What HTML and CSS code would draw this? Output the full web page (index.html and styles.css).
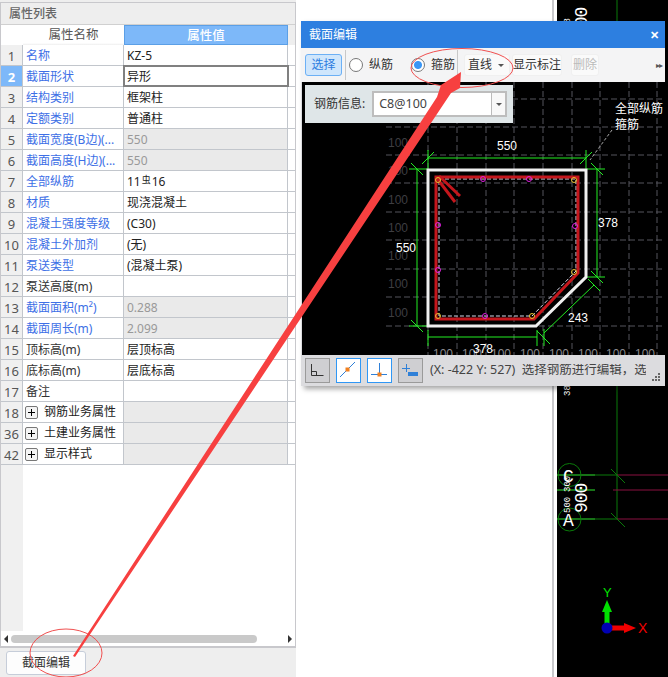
FILE: index.html
```html
<!DOCTYPE html>
<html lang="zh">
<head>
<meta charset="utf-8">
<title>截面编辑</title>
<link rel="stylesheet" href="styles.css">
</head>
<body>
<div class="app">
  <aside class="panel">
    <div class="panel-body">
      <div class="panel-title">属性列表</div>
      <div class="row head"><div></div><div class="h-name">属性名称</div><div class="h-value">属性值</div><div></div></div>
      <div class="row"><div class="idx">1</div><div class="name link">名称</div><div class="val">KZ-5</div><div></div></div>
      <div class="row"><div class="idx sel">2</div><div class="name link">截面形状</div><div class="val current">异形</div><div></div></div>
      <div class="row"><div class="idx">3</div><div class="name link">结构类别</div><div class="val">框架柱</div><div></div></div>
      <div class="row"><div class="idx">4</div><div class="name link">定额类别</div><div class="val">普通柱</div><div></div></div>
      <div class="row"><div class="idx">5</div><div class="name link">截面宽度(B边)(...</div><div class="val off">550</div><div></div></div>
      <div class="row"><div class="idx">6</div><div class="name link">截面高度(H边)(...</div><div class="val off">550</div><div></div></div>
      <div class="row"><div class="idx">7</div><div class="name link">全部纵筋</div><div class="val">11<span class="rebar">虫</span>16</div><div></div></div>
      <div class="row"><div class="idx">8</div><div class="name link">材质</div><div class="val">现浇混凝土</div><div></div></div>
      <div class="row"><div class="idx">9</div><div class="name link">混凝土强度等级</div><div class="val">(C30)</div><div></div></div>
      <div class="row"><div class="idx">10</div><div class="name link">混凝土外加剂</div><div class="val">(无)</div><div></div></div>
      <div class="row"><div class="idx">11</div><div class="name link">泵送类型</div><div class="val">(混凝土泵)</div><div></div></div>
      <div class="row"><div class="idx">12</div><div class="name">泵送高度(m)</div><div class="val"></div><div></div></div>
      <div class="row"><div class="idx">13</div><div class="name link">截面面积(m²)</div><div class="val off">0.288</div><div></div></div>
      <div class="row"><div class="idx">14</div><div class="name link">截面周长(m)</div><div class="val off">2.099</div><div></div></div>
      <div class="row"><div class="idx">15</div><div class="name">顶标高(m)</div><div class="val">层顶标高</div><div></div></div>
      <div class="row"><div class="idx">16</div><div class="name">底标高(m)</div><div class="val">层底标高</div><div></div></div>
      <div class="row"><div class="idx">17</div><div class="name">备注</div><div class="val"></div><div></div></div>
      <div class="row"><div class="idx">18</div><div class="name group"><span class="plus"></span>钢筋业务属性</div><div class="val off"></div><div></div></div>
      <div class="row"><div class="idx">36</div><div class="name group"><span class="plus"></span>土建业务属性</div><div class="val off"></div><div></div></div>
      <div class="row"><div class="idx">42</div><div class="name group"><span class="plus"></span>显示样式</div><div class="val off"></div><div></div></div>
      <div class="filler"><div class="filler-idx"></div></div>
      <div class="scrollbar">
        <span class="arrow-l"></span>
        <span class="thumb"></span>
        <span class="arrow-r"></span>
      </div>
    </div>
    <div class="panel-foot"><button class="edit-btn">截面编辑</button></div>
  </aside>
  <div class="middle"><div class="divider"></div></div>
  <div class="scene">
    <svg class="scene-svg" width="111" height="677" viewBox="557 0 111 677">
      <path d="M617 0V519" stroke="#0a7a0a" fill="none"/>
      <path d="M557 475H595M557 490H595M557 519H595" stroke="#2ee62e" fill="none"/>
      <path d="M595 475H617M595 519H617" stroke="#0a7a0a" fill="none"/>
      <path d="M617 475H668M613 490H668M617 519H668" stroke="#8a1040" fill="none"/>
      <path d="M611 469L625 483M611 513L625 527" stroke="#0a7a0a" fill="none"/>
      <circle cx="569.500" cy="475" r="11.500" fill="none" stroke="#0a7a0a"/>
      <circle cx="569.500" cy="519.500" r="11.500" fill="none" stroke="#0a7a0a"/>
      <text x="563" y="482" class="grid-letter">C</text>
      <text x="563" y="526" class="grid-letter">A</text>
      <text class="vert-big" transform="translate(587 513) rotate(-90)">900</text>
      <text class="vert-big" transform="translate(587 37) rotate(-90)">900</text>
      <text class="vert-small" transform="translate(570 29) rotate(-90)">38</text>
      <text class="vert-small" transform="translate(570 396) rotate(-90)">38</text>
      <text class="vert-small" transform="translate(570 492) rotate(-90)">300</text>
      <text class="vert-small" transform="translate(570 513) rotate(-90)">500</text>
      <path d="M607 628V612" stroke="#00e000" stroke-width="5"/>
      <path d="M607 600L612 612H602Z" fill="#00e000"/>
      <path d="M607 628H625" stroke="#f00000" stroke-width="5"/>
      <path d="M636 628L624 623V633Z" fill="#f00000"/>
      <circle cx="607" cy="628" r="5.500" fill="#0000b4"/>
      <text x="603" y="597" class="axis-y">Y</text>
      <text x="638" y="633" class="axis-x">X</text>
    </svg>
  </div>
</div>

<section class="dialog">
  <header class="dlg-title"><span>截面编辑</span><span class="dlg-close">✕</span></header>
  <div class="toolbar">
    <button class="tb-btn active">选择</button>
    <span class="sep"></span>
    <label class="radio"><span class="dot"></span>纵筋</label>
    <label class="radio second"><span class="dot on"></span>箍筋</label>
    <span class="sep sep-b"></span>
    <button class="tb-btn plain line-btn">直线<span class="caret"></span></button>
    <button class="tb-btn plain mark-btn">显示标注</button>
    <button class="tb-btn plain disabled">删除</button>
    <span class="more">▸▸</span>
  </div>
  <div class="canvas">
    <svg class="canvas-svg" width="363" height="273" viewBox="302 82 363 273">
      <g class="grid-lines">
        <path d="M428 82V355M457 82V355M486 82V355M514 82V355M543 82V355M572 82V355M600 82V355M629 82V355M657 82V355"/>
        <path d="M386 99H665M386 127H665M386 155H665M386 183H665M386 212H665M386 240H665M386 269H665M386 297H665M386 326H665"/>
      </g>
      <g class="grid-labels">
        <text x="388" y="147">100</text><text x="388" y="175">100</text><text x="388" y="204">100</text>
        <text x="388" y="232">100</text><text x="388" y="260">100</text><text x="388" y="288">100</text><text x="388" y="317">100</text>
      </g>
      <g class="grid-labels-low">
        <text x="433" y="358">100</text><text x="462" y="358">100</text><text x="491" y="358">100</text><text x="520" y="358">100</text>
        <text x="549" y="358">100</text><text x="578" y="358">100</text><text x="606" y="358">100</text><text x="635" y="358">100</text>
      </g>
      <path class="leader" d="M612 130L590 160"/>
      <g class="dim">
        <path d="M428 158H586M428 150V170M586 150V170M422 164L434 152M580 164L592 152"/>
        <path d="M597 169V277M587 169H605M587 277H605M591 163L603 175M591 271L603 283"/>
        <path d="M417 169V326M409 169H427M409 326H427M411 163L423 175M411 320L423 332"/>
        <path d="M428 337H537M428 330V346M537 330V346M544 329V346M537 331L550 344"/>
        <path d="M544 333L594 285M588 279L600 291"/>
      </g>
      <path class="concrete" d="M428 170H586V277L536 326H428Z"/>
      <path class="stirrup-guide" d="M439 179H576V271L532 316H439Z"/>
      <path class="stirrup" d="M436 177H578V273L534 319H436Z"/>
      <path class="stirrup" d="M436 177L455 202M439 176L460 196"/>
      <g class="bars-m">
        <circle cx="483" cy="179" r="2.500"/><circle cx="529" cy="179" r="2.500"/><circle cx="438" cy="225" r="2.500"/>
        <circle cx="575" cy="226" r="2.500"/><circle cx="438" cy="270" r="2.500"/><circle cx="485" cy="316" r="2.500"/>
      </g>
      <g class="bars-y">
        <circle cx="438" cy="180" r="2.500"/><circle cx="574" cy="180" r="2.500"/><circle cx="574" cy="272" r="2.500"/>
        <circle cx="438" cy="316" r="2.500"/><circle cx="532" cy="316" r="2.500"/>
      </g>
      <g class="dim-text">
        <text x="497" y="150">550</text><text x="598" y="227">378</text><text x="396" y="252">550</text>
        <text x="568" y="322">243</text><text x="473" y="353">378</text>
        <text x="615" y="113">全部纵筋</text><text x="615" y="129">箍筋</text>
      </g>
    </svg>
    <div class="rebar-info">
      <span class="rebar-label">钢筋信息:</span>
      <div class="combo"><span class="combo-text">C8@100</span><span class="combo-drop"><span class="caret"></span></span></div>
    </div>
  </div>
  <footer class="status">
    <span class="snap">
      <svg width="23" height="23" viewBox="0 0 23 23"><path d="M5.500 5V16.500H17.500M5.500 12.500H10.500V16.500" class="ic-dark"/></svg>
    </span>
    <span class="snap on">
      <svg width="23" height="23" viewBox="0 0 23 23"><path d="M3 18L18 3" class="ic-blue"/><rect x="8.500" y="8.500" width="4" height="4" class="ic-or"/></svg>
    </span>
    <span class="snap on">
      <svg width="23" height="23" viewBox="0 0 23 23"><path d="M11.500 4V15.500M3 15.500H19" class="ic-blue"/><rect x="9.500" y="13.500" width="4" height="4" class="ic-or"/></svg>
    </span>
    <span class="snap">
      <svg width="23" height="23" viewBox="0 0 23 23"><path d="M3 9.500H11M7.500 5V13" class="ic-blue"/><rect x="9" y="13" width="10" height="4" class="ic-fill"/></svg>
    </span>
    <span class="status-text">(X: -422 Y: 527)&nbsp; 选择钢筋进行编辑，选择钢筋</span>
    <svg class="grip" width="9" height="9" viewBox="0 0 9 9"><path d="M6 0h2v2H6zM3 3h2v2H3zM6 3h2v2H6zM0 6h2v2H0zM3 6h2v2H3zM6 6h2v2H6z"/></svg>
  </footer>
</section>

<svg class="annot" width="668" height="677" viewBox="0 0 668 677">
  <ellipse cx="66" cy="653" rx="36" ry="24"/>
  <ellipse cx="462" cy="68" rx="51" ry="19.500"/>
  <path class="arrow" d="M73 656L437 97L441 85L461 72L460 88L451 93L75 657Z"/>
</svg>
</body>
</html>
```
FILE: styles.css
```css
* { box-sizing: border-box; }
html, body { margin: 0; padding: 0; }
body {
  width: 668px;
  height: 677px;
  overflow: hidden;
  position: relative;
  background: #fff;
  font: 12px/1 "Noto Sans", "Noto Sans CJK SC", sans-serif;
  color: #222;
}
button { font: inherit; }

.app { display: flex; width: 668px; height: 677px; }

/* Left property panel */
.panel { width: 296px; flex: none; display: flex; flex-direction: column; background: #eee; }
.panel-body {
  flex: 1;
  display: flex;
  flex-direction: column;
  margin-top: 2px;
  background: #fff;
  border: 1px solid #c8c8cc;
  border-bottom-width: 2px;
}
.panel-title {
  height: 22px;
  padding-left: 8px;
  line-height: 21px;
  background: #eee;
  color: #666;
  font-weight: 500;
  border-bottom: 1px solid #d0d0d0;
  flex: none;
}
.row {
  display: grid;
  grid-template-columns: 22px 101px 164px 1fr;
  grid-template-rows: 20px;
  height: 21px;
  flex: none;
  border-bottom: 1px solid #c2c6cc;
  line-height: 22px;
}
.row.head { height: 20px; border-bottom: 0; text-align: center; line-height: 20px; }
.row.head > :last-child { background: #eee; }
.h-name { background: linear-gradient(#fff, #fff 90%, #eee); color: #555; font-size: 12.500px; }
.h-value {
  background: #7db8f9;
  color: #fff;
  font-weight: 500;
  border: 1px solid #5b9fe6;
  font-size: 12.500px;
}
.idx { background: #f0f0f0; text-align: center; color: #555; font-size: 13px; border-right: 1px solid #c2c6cc; }
.idx.sel { background: #7db8f9; color: #fff; font-weight: 700; }
.name {
  padding-left: 3px;
  border-right: 1px solid #c2c6cc;
  color: #333;
  white-space: nowrap;
}
.name.link { color: #3d6fe6; }
.name.group { display: flex; align-items: center; padding-left: 2px; color: #222; }
.plus {
  position: relative;
  width: 13px;
  height: 13px;
  margin-right: 6px;
  flex: none;
  border: 1px solid #777;
  border-radius: 2px;
  background: linear-gradient(#000, #000) center / 7px 1px no-repeat,
              linear-gradient(#000, #000) center / 1px 7px no-repeat,
              #f4f4f4;
}
.val { padding-left: 3px; border-right: 1px solid #c2c6cc; color: #222; white-space: nowrap; }
.val.off { background: #eaeaea; color: #999; }
.val.current { outline: 2px solid #808080; outline-offset: -1px; padding-left: 3px; }
.rebar { font-size: 9px; position: relative; top: -3px; margin: 0 1px; }

.filler { flex: 1; min-height: 0; display: flex; }
.filler-idx { width: 22px; background: #f0f0f0; }
.scrollbar {
  height: 15px;
  flex: none;
  display: flex;
  align-items: center;
  padding: 0 2px;
  background: #fff;
}
.thumb { width: 246px; height: 8px; margin-left: 3px; border-radius: 4px; background: #c9c9c9; }
.arrow-l { width: 0; height: 0; border: 4px solid transparent; border-left-width: 0; border-right: 4px solid #333; margin-left: 1px; }
.arrow-r { width: 0; height: 0; border: 4px solid transparent; border-right-width: 0; border-left: 4px solid #333; margin-left: auto; margin-right: 1px; }
.panel-foot { height: 29px; flex: none; padding: 3px 0 0 6px; background: #eee; }
.edit-btn {
  display: block;
  width: 80px;
  height: 24px;
  padding: 0;
  background: #fdfdfd;
  border: 1px solid #c6cdd9;
  border-radius: 3px;
  color: #333;
}

/* Middle */
.middle { width: 261px; flex: none; background: #fff; display: flex; justify-content: flex-end; padding-right: 3px; }
.divider { width: 2px; background: #c9c9cc; }

/* Right scene */
.scene { flex: 1; background: #000; }
.scene-svg { display: block; }
.grid-letter { font: 18px "Liberation Mono", monospace; fill: #fff; }
.vert-big { font: 18px "Liberation Mono", monospace; fill: #fff; letter-spacing: -1px; }
.vert-small { font: 9px "Liberation Mono", monospace; fill: #fff; }
.axis-y { font: 13px "Liberation Sans", sans-serif; fill: #00e000; }
.axis-x { font: 14px "Liberation Sans", sans-serif; fill: #f00000; }

/* Dialog */
.dialog {
  position: absolute;
  left: 301px;
  top: 21px;
  width: 364px;
  height: 365px;
  display: flex;
  flex-direction: column;
  background: #dcdcdf;
  box-shadow: 3px 3px 5px rgba(0, 0, 0, .35);
}
.dlg-title {
  height: 27px;
  flex: none;
  display: flex;
  justify-content: space-between;
  align-items: center;
  padding: 0 6px 0 8px;
  background: #2d7fe0;
  color: #fff;
  font-size: 12px;
}
.dlg-close { font-size: 11px; font-weight: 700; }
.toolbar {
  height: 34px;
  flex: none;
  display: flex;
  align-items: center;
  padding: 0 4px;
  background: #f4f4f5;
  position: relative;
}
.tb-btn {
  height: 22px;
  padding: 0;
  border-radius: 3px;
  background: none;
  border: 1px solid transparent;
  color: #333;
}
.tb-btn.active { width: 37px; background: #cfe6fc; border-color: #6cb0f5; color: #2c7de0; }
.tb-btn.plain { border-color: #f0f0f0; background: #fafafa; }
.tb-btn.disabled { color: #bbb; width: 28px; margin-left: 9px; }
.line-btn {
  width: 46px;
  margin: 0 2px 0 3px;
  padding-left: 3px;
  display: flex;
  align-items: center;
  gap: 6px;
}
.mark-btn { width: 50px; }
.sep { width: 1px; height: 30px; background: #c8c8c8; margin: 0 3px; }
.sep-b { margin-left: 1px; }
.radio { display: flex; align-items: center; color: #333; width: 62px; }
.radio.second { width: 45px; }
.dot {
  width: 14px;
  height: 14px;
  margin-right: 6px;
  border: 1px solid #777;
  border-radius: 50%;
  background: #fff;
  flex: none;
}
.dot.on { background: radial-gradient(circle, #3a96f5 0 3.500px, #fff 4.500px); }
.caret {
  display: inline-block;
  width: 0;
  height: 0;
  border: 3px solid transparent;
  border-top: 3px solid #555;
  border-bottom: 0;
}
.more { margin-left: auto; margin-right: -1px; font-size: 8px; color: #555; letter-spacing: -1px; }

.canvas { flex: 1; position: relative; background: #000; margin: 0 0 0 1px; overflow: hidden; }
.canvas-svg { display: block; }
.grid-lines path { stroke: #55555c; stroke-dasharray: 6 3; fill: none; }
.grid-labels text { font: 12px "Liberation Sans", sans-serif; fill: #3e3e42; }
.grid-labels-low text { font: 12px "Liberation Sans", sans-serif; fill: #8a8a8e; }
.leader { stroke: #aaa; stroke-dasharray: 3 2; fill: none; }
.dim path { stroke: #22ee22; fill: none; }
.concrete { fill: none; stroke: #f0f0f0; stroke-width: 3; }
.stirrup-guide { fill: none; stroke: #d8d8e8; stroke-dasharray: 4 2; }
.stirrup { fill: none; stroke: #c4161c; stroke-width: 3; }
.bars-m circle { fill: none; stroke: #e020e0; }
.bars-y circle { fill: none; stroke: #e8c030; }
.dim-text text { font: 12px "Liberation Sans", "Noto Sans CJK SC", sans-serif; fill: #fff; }

.rebar-info {
  position: absolute;
  left: 3px;
  top: 3px;
  width: 208px;
  height: 38px;
  padding-left: 9px;
  display: flex;
  align-items: center;
  gap: 7px;
  background: #dfe6e8;
  color: #333;
}
.combo {
  width: 135px;
  height: 26px;
  display: flex;
  background: #fff;
  border: 2px solid #bdbdbd;
}
.combo-text { flex: 1; padding-left: 5px; line-height: 22px; font-size: 12.500px; color: #444; }
.combo-drop { width: 14px; border-left: 1px solid #bbb; display: flex; align-items: center; justify-content: center; background: #f8f8f8; }

.status {
  height: 31px;
  flex: none;
  display: flex;
  align-items: center;
  gap: 6px;
  padding: 0 4px;
  background: #dcdcdf;
}
.snap {
  width: 25px;
  height: 25px;
  flex: none;
  border: 1px solid #9a9a9a;
  background: #cfcfd2;
}
.snap svg { display: block; }
.snap.on { border-color: #2f97f5; background: #fff; }
.ic-dark { fill: none; stroke: #333; }
.ic-blue { fill: none; stroke: #2f80d8; }
.ic-or { fill: #f08020; }
.ic-fill { fill: #2f80d8; }
.status-text {
  width: 217px;
  overflow: hidden;
  white-space: nowrap;
  color: #444;
  font-size: 12.500px;
  padding-left: 1px;
}
.grip { flex: none; margin: 14px 0 0 auto; fill: #666; }

/* Annotation overlay */
.annot { position: absolute; left: 0; top: 0; pointer-events: none; }
.annot ellipse { fill: none; stroke: #f05050; }
.arrow { fill: #f74040; }
```
